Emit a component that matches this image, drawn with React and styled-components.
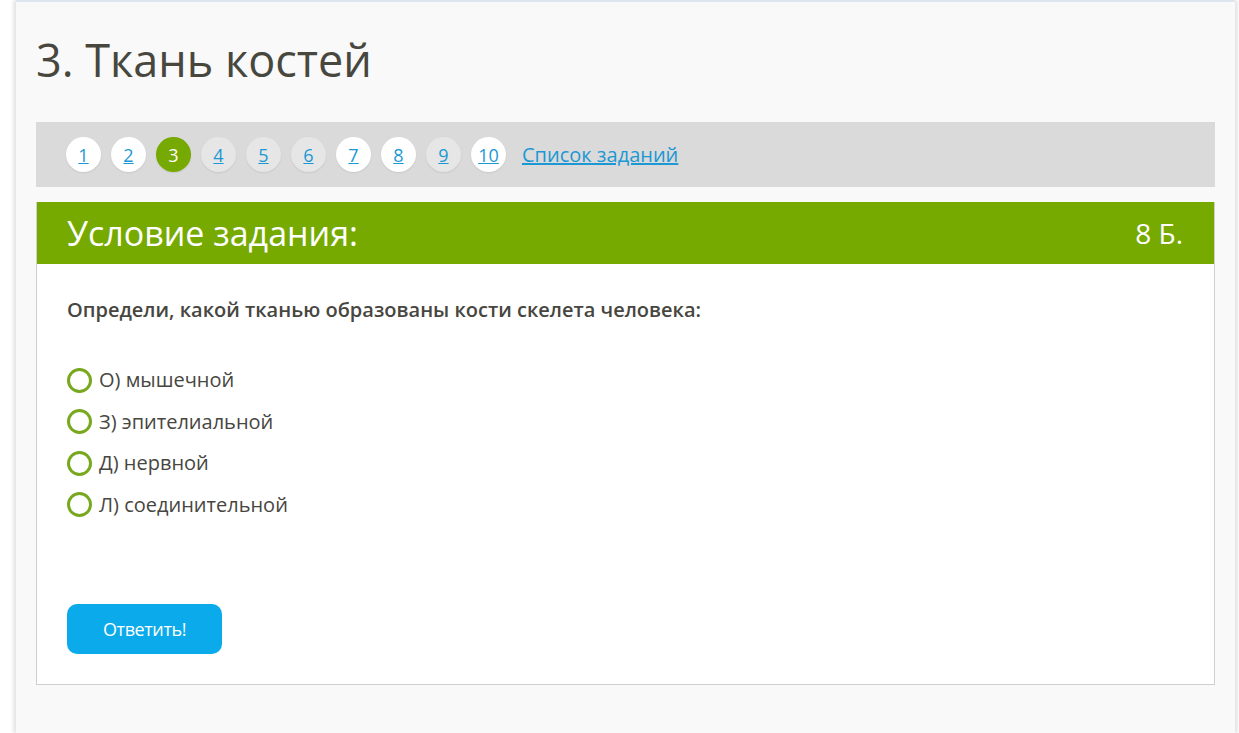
import React, { useState } from 'react';
import styled, { createGlobalStyle } from 'styled-components';

const GlobalStyle = createGlobalStyle`
  html, body {
    margin: 0;
    padding: 0;
    background: #fff;
    font-family: "Open Sans", "Noto Sans", sans-serif;
  }
`;

const Sheet = styled.div`
  margin-left: 16px;
  width: 1219px;
  min-height: 733px;
  box-sizing: border-box;
  background: #f9f9f9;
  border-top: 2px solid #dde6ef;
  box-shadow: -3px 0 3px rgba(0, 0, 0, 0.1), 3px 0 3px rgba(0, 0, 0, 0.1);
  padding: 28px 20px 40px;
`;

const Title = styled.h1`
  margin: 0 0 32px;
  font-size: 45px;
  font-weight: 400;
  line-height: 60px;
  color: #48473e;
`;

const NavBar = styled.div`
  display: flex;
  align-items: center;
  gap: 10px;
  height: 65px;
  padding-left: 30px;
  background: #dadada;
  margin-bottom: 15px;
`;

const NavCircle = styled.a`
  width: 35px;
  height: 35px;
  border-radius: 50%;
  display: flex;
  align-items: center;
  justify-content: center;
  font-size: 18px;
  color: ${p => (p.$active ? '#fff' : '#1c98d4')};
  text-decoration: ${p => (p.$active ? 'none' : 'underline')};
  background: ${p => (p.$active ? '#76a901' : p.$seen ? '#fff' : '#e6e6e6')};
  box-shadow: 0 1px 2px rgba(0, 0, 0, 0.08);
  cursor: pointer;
`;

const ListLink = styled.a`
  margin-left: 6px;
  font-size: 20px;
  color: #1c98d4;
  text-decoration: underline;
  cursor: pointer;
`;

const Card = styled.div`
  background: #fff;
  border: 1px solid #cfcfcf;
  border-top: none;
`;

const CardHead = styled.div`
  display: flex;
  align-items: center;
  justify-content: space-between;
  height: 62px;
  padding: 0 31px 0 30px;
  background: #76aa01;
  color: #fff;
`;

const HeadTitle = styled.span`
  font-size: 34px;
`;

const Points = styled.span`
  font-size: 28px;
`;

const CardBody = styled.div`
  padding: 32px 30px 30px;
`;

const Question = styled.p`
  margin: 0 0 43px;
  font-size: 20px;
  font-weight: 600;
  color: #47463f;
`;

const Options = styled.div`
  display: flex;
  flex-direction: column;
  gap: 13.5px;
  margin-bottom: 85px;
`;

const Option = styled.label`
  display: flex;
  align-items: center;
  gap: 7px;
  font-size: 20px;
  line-height: 28px;
  color: #47463f;
  cursor: pointer;
`;

const Radio = styled.span`
  width: 19px;
  height: 19px;
  border-radius: 50%;
  border: 3px solid #77a81e;
  background: ${p => (p.$checked ? 'radial-gradient(circle, #77a81e 45%, #fff 50%)' : '#fff')};
`;

const Submit = styled.button`
  width: 155px;
  height: 50px;
  border: none;
  border-radius: 10px;
  background: #0baaea;
  color: #fff;
  font-family: "Open Sans", sans-serif;
  font-size: 18px;
  letter-spacing: -0.4px;
  cursor: pointer;
`;

const tasks = [
  { n: 1, seen: true },
  { n: 2, seen: true },
  { n: 3, active: true },
  { n: 4 },
  { n: 5 },
  { n: 6 },
  { n: 7, seen: true },
  { n: 8, seen: true },
  { n: 9 },
  { n: 10, seen: true },
];

const answers = ['О) мышечной', 'З) эпителиальной', 'Д) нервной', 'Л) соединительной'];

export default function App() {
  const [picked, setPicked] = useState(null);

  return (
    <>
      <GlobalStyle />
      <Sheet>
        <Title>3. Ткань костей</Title>
        <NavBar>
          {tasks.map(t => (
            <NavCircle key={t.n} $active={t.active} $seen={t.seen}>{t.n}</NavCircle>
          ))}
          <ListLink>Список заданий</ListLink>
        </NavBar>
        <Card>
          <CardHead>
            <HeadTitle>Условие задания:</HeadTitle>
            <Points>8 Б.</Points>
          </CardHead>
          <CardBody>
            <Question>Определи, какой тканью образованы кости скелета человека:</Question>
            <Options>
              {answers.map((a, i) => (
                <Option key={a} onClick={() => setPicked(i)}>
                  <Radio $checked={picked === i} />
                  {a}
                </Option>
              ))}
            </Options>
            <Submit>Ответить!</Submit>
          </CardBody>
        </Card>
      </Sheet>
    </>
  );
}
